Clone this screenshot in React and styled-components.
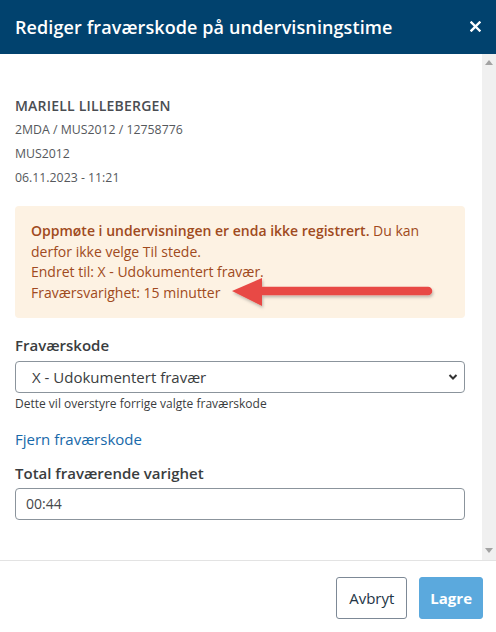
import React from "react";
import styled, { createGlobalStyle } from "styled-components";

const Global = createGlobalStyle`
  html, body { margin: 0; padding: 0; background: #fff; }
  body { font-family: "Open Sans", "Noto Sans", sans-serif; }
  * { box-sizing: border-box; }
`;

const Modal = styled.div`
  width: 496px;
  height: 632px;
  display: flex;
  flex-direction: column;
  background: #fff;
  overflow: hidden;
`;

const Header = styled.header`
  height: 54px;
  flex: none;
  background: #01426e;
  display: flex;
  align-items: center;
  justify-content: space-between;
  padding: 0 15px;
`;

const Title = styled.h1`
  margin: 0;
  color: #fff;
  font-size: 18px;
  font-weight: 600;
  letter-spacing: 0.1px;
`;

const Close = styled.button`
  border: 0;
  background: none;
  padding: 0;
  width: 16px;
  height: 16px;
  display: flex;
  align-items: center;
  justify-content: center;
  margin-right: -2px;
  margin-top: -2px;
`;

const Body = styled.div`
  flex: 1;
  display: flex;
  min-height: 0;
`;

const Content = styled.div`
  flex: 1;
  overflow: hidden;
  padding: 42px 17px 40px 15px;
  display: flex;
  flex-direction: column;
`;

const ScrollTrack = styled.div`
  width: 14px;
  flex: none;
  background: #f0f0f0;
  display: flex;
  flex-direction: column;
  justify-content: space-between;
  align-items: center;
  padding: 6px 0 7px;
`;

const Name = styled.div`
  font-size: 14px;
  line-height: 20px;
  font-weight: 600;
  color: #4a4d52;
  letter-spacing: 0.2px;
`;

const Meta = styled.div`
  font-size: 12.3px;
  line-height: 24px;
  color: #55585c;
  margin-top: ${(p) => p.$mt || 0}px;
`;

const Alert = styled.div`
  margin-top: 16px;
  background: #fdf2e3;
  border-radius: 4px;
  padding: 15px 16px;
  font-size: 14px;
  line-height: 20.5px;
  color: #a04a20;
  position: relative;
`;

const Strong = styled.strong`
  font-weight: 600;
`;

const ArrowSvg = styled.svg`
  position: absolute;
  left: 216px;
  top: 71px;
  overflow: visible;
`;

const Label = styled.label`
  display: block;
  font-size: 15px;
  line-height: 22px;
  font-weight: 600;
  color: #3a3d40;
  margin-top: ${(p) => p.$mt}px;
`;

const SelectWrap = styled.div`
  position: relative;
  margin-top: 5px;
  height: 32px;
  border: 1px solid #8b949c;
  border-radius: 4px;
  display: flex;
  align-items: center;
  padding: 0 16px;
  font-size: 15px;
  color: #3a3d40;
`;

const Chevron = styled.svg`
  position: absolute;
  right: 6px;
  top: 11px;
`;

const Help = styled.div`
  margin-top: 2px;
  font-size: 12px;
  line-height: 18px;
  color: #3a3d40;
`;

const Link = styled.a`
  display: block;
  margin-top: 15px;
  font-size: 15px;
  line-height: 22px;
  color: #1769aa;
  text-decoration: none;
`;

const Input = styled.div`
  margin-top: 4px;
  height: 33px;
  border: 1px solid #8b949c;
  border-radius: 4px;
  display: flex;
  align-items: center;
  padding: 0 10px;
  font-size: 14px;
  color: #45484b;
`;

const Footer = styled.footer`
  flex: none;
  height: 72px;
  border-top: 1px solid #e3e3e3;
  display: flex;
  justify-content: flex-end;
  align-items: flex-start;
  gap: 12px;
  padding: 16px 13px 0 0;
`;

const Button = styled.button`
  height: 42px;
  padding: 0 ${(p) => (p.$primary ? 10 : 12)}px;
  border-radius: 3px;
  font-family: "Open Sans", sans-serif;
  font-size: 15px;
  font-weight: ${(p) => (p.$primary ? 700 : 400)};
  border: 1px solid ${(p) => (p.$primary ? "#5ba9dd" : "#7d8996")};
  background: ${(p) => (p.$primary ? "#5ba9dd" : "#fff")};
  color: ${(p) => (p.$primary ? "#fff" : "#233546")};
`;

export default function App() {
  return (
    <>
      <Global />
      <Modal>
        <Header>
          <Title>Rediger fraværskode på undervisningstime</Title>
          <Close aria-label="Lukk">
            <svg width="11" height="11" viewBox="0 0 11 11">
              <path d="M1.5 1.5 L9.5 9.5 M9.5 1.5 L1.5 9.5" stroke="#fff" strokeWidth="2.4" strokeLinecap="square" />
            </svg>
          </Close>
        </Header>
        <Body>
          <Content>
            <Name>MARIELL LILLEBERGEN</Name>
            <Meta $mt={2}>2MDA / MUS2012 / 12758776</Meta>
            <Meta>MUS2012</Meta>
            <Meta>06.11.2023 - 11:21</Meta>
            <Alert>
              <Strong>Oppmøte i undervisningen er enda ikke registrert.</Strong> Du kan derfor ikke velge Til stede.
              <br />
              Endret til: X - Udokumentert fravær.
              <br />
              Fraværsvarighet: 15 minutter
              <ArrowSvg width="200" height="32" viewBox="0 0 200 32">
                <defs>
                  <filter id="sh" x="-10%" y="-50%" width="120%" height="200%">
                    <feDropShadow dx="1" dy="2" stdDeviation="1.5" floodColor="#000" floodOpacity="0.25" />
                  </filter>
                </defs>
                <g filter="url(#sh)">
                  <path d="M28 14 L197 14" stroke="#e84a45" strokeWidth="8.5" strokeLinecap="round" />
                  <path d="M1 14 L31 1 L31 29 Z" fill="#e84a45" />
                </g>
              </ArrowSvg>
            </Alert>
            <Label $mt={16}>Fraværskode</Label>
            <SelectWrap>
              X - Udokumentert fravær
              <Chevron width="10" height="8" viewBox="0 0 10 8">
                <path d="M1.5 2 L5 5.5 L8.5 2" fill="none" stroke="#333" strokeWidth="2" />
              </Chevron>
            </SelectWrap>
            <Help>Dette vil overstyre forrige valgte fraværskode</Help>
            <Link href="#">Fjern fraværskode</Link>
            <Label $mt={12}>Total fraværende varighet</Label>
            <Input>00:44</Input>
          </Content>
          <ScrollTrack>
            <svg width="8" height="5" viewBox="0 0 8 5"><path d="M0 5 L4 0 L8 5 Z" fill="#a3a3a3" /></svg>
            <svg width="8" height="5" viewBox="0 0 8 5"><path d="M0 0 L4 5 L8 0 Z" fill="#a3a3a3" /></svg>
          </ScrollTrack>
        </Body>
        <Footer>
          <Button>Avbryt</Button>
          <Button $primary>Lagre</Button>
        </Footer>
      </Modal>
    </>
  );
}
